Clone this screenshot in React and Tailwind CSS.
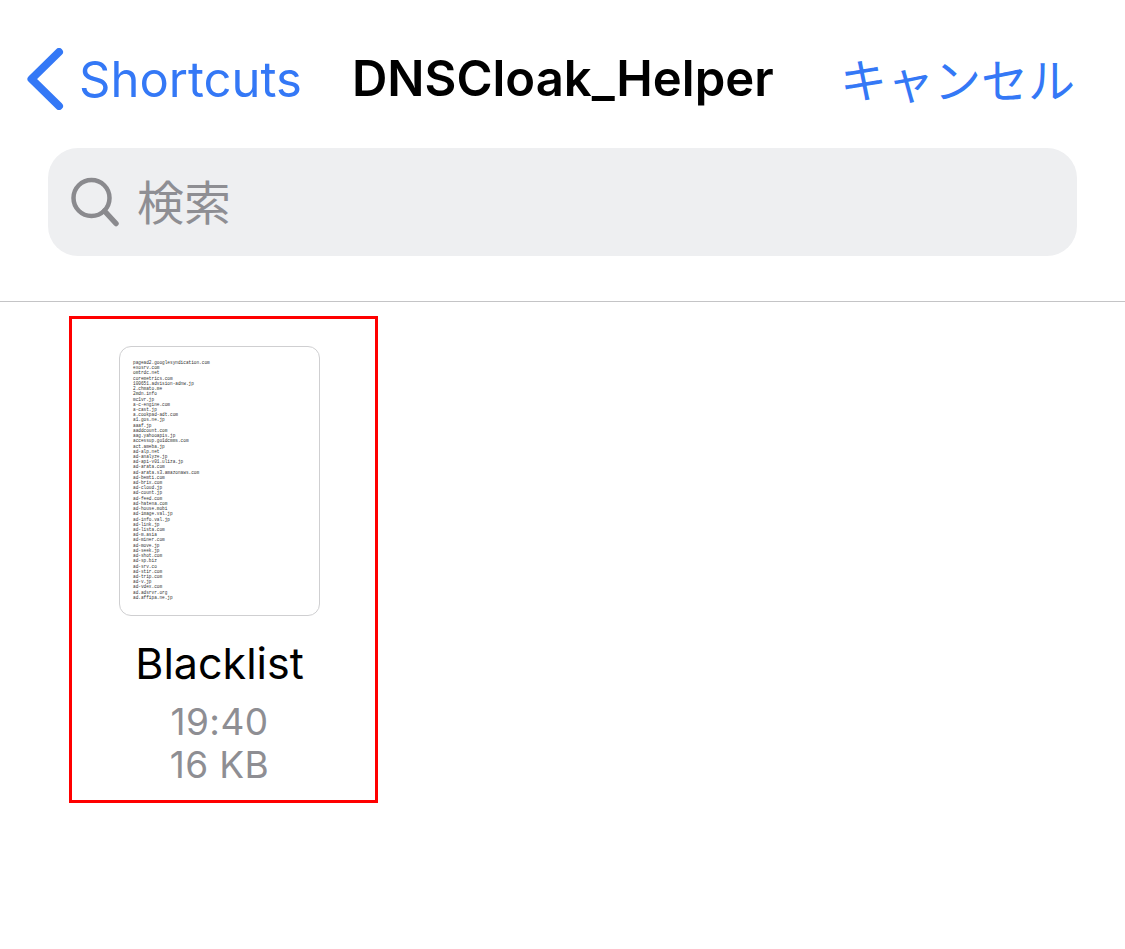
import React from 'react';

const domains = [
  'pagead2.googlesyndication.com', 'exosrv.com', 'omtrdc.net', 'coremetrics.com', '100651.advision-adnw.jp',
  '2.chmato.me', '2mdn.info', 'mc1vr.jp', 'a-c-engine.com', 'a-cast.jp', 'a.cookpad-adt.com', 'a1.gos.ne.jp',
  'aaaf.jp', 'aaddcount.com', 'aag.yahooapis.jp', 'accessup.go1dcmms.com', 'act.ameba.jp', 'ad-alp.net',
  'ad-analyze.jp', 'ad-api-v01.uliza.jp', 'ad-arata.com', 'ad-arata.s3.amazonaws.com', 'ad-bemti.com',
  'ad-brix.com', 'ad-cloud.jp', 'ad-count.jp', 'ad-feed.com', 'ad-hatena.com', 'ad-house.mobi',
  'ad-image.val.jp', 'ad-info.val.jp', 'ad-link.jp', 'ad-lista.com', 'ad-m.asia', 'ad-miner.com',
  'ad-move.jp', 'ad-seek.jp', 'ad-shot.com', 'ad-sp.biz', 'ad-srv.co', 'ad-stir.com', 'ad-trip.com',
  'ad-v.jp', 'ad-vdex.com', 'ad.adsrvr.org', 'ad.affipa.ne.jp',
];

const App = () => {
  return (
    <div className="w-[1125px] h-[949px] bg-white overflow-hidden font-['Inter','Noto_Sans_CJK_JP',sans-serif]">
      {/* nav bar */}
      <div className="h-[148px] flex items-start pt-[48px] pl-[27px] pr-[50px]">
        <div className="flex items-center gap-[15px] h-[62px] text-[#3478f6]">
          <svg width="37" height="62" viewBox="0 0 37 62" fill="none">
            <path d="M32 4 L4.500 31 L32 58" stroke="#3478f6" strokeWidth="8" strokeLinecap="round" strokeLinejoin="round" />
          </svg>
          <span className="text-[49px] leading-none">Shortcuts</span>
        </div>
        <span className="ml-[50px] text-[49px] leading-[62px] font-semibold text-black">DNSCloak_Helper</span>
        <span className="ml-auto text-[47px] leading-[60px] text-[#3478f6] font-['Noto_Sans_CJK_JP',sans-serif]">キャンセル</span>
      </div>

      {/* search */}
      <div className="ml-[48px] w-[1029px] h-[108px] rounded-[30px] bg-[#eeeff1] flex items-center pl-[23px] gap-[18px]">
        <svg width="48" height="50" viewBox="0 0 48 50" fill="none">
          <circle cx="20.500" cy="21" r="18" stroke="#8a8a8e" strokeWidth="4.500" />
          <path d="M33.500 34 L45 46.500" stroke="#8a8a8e" strokeWidth="5.500" strokeLinecap="round" />
        </svg>
        <span className="mb-[6px] text-[47px] leading-none text-[#8e8e93] font-['Noto_Sans_CJK_JP',sans-serif]">検索</span>
      </div>

      <div className="mt-[45px] h-px bg-[#c4c4c6]" />

      {/* file item */}
      <div className="ml-[69px] mt-[14px] w-[309px] h-[487px] border-[3px] border-[#ff0000] flex flex-col items-center pt-[27px] pr-[8px]">
        <div className="w-[201px] h-[270px] border border-[#cfcfd1] rounded-[12px] bg-white pt-[13px] pl-[13px] font-['Liberation_Mono',monospace] text-[4.430px] leading-[5.220px] text-[#333]">
          {domains.map((d) => (
            <div key={d} className="whitespace-nowrap">{d}</div>
          ))}
        </div>
        <div className="mt-[20px] text-[43px] leading-[54px] text-black">Blacklist</div>
        <div className="mt-[10px] text-[37px] leading-[43px] tracking-[0.4px] text-[#8e8e93] text-center">
          <div>19:40</div>
          <div>16 KB</div>
        </div>
      </div>
    </div>
  );
};

export default App;
